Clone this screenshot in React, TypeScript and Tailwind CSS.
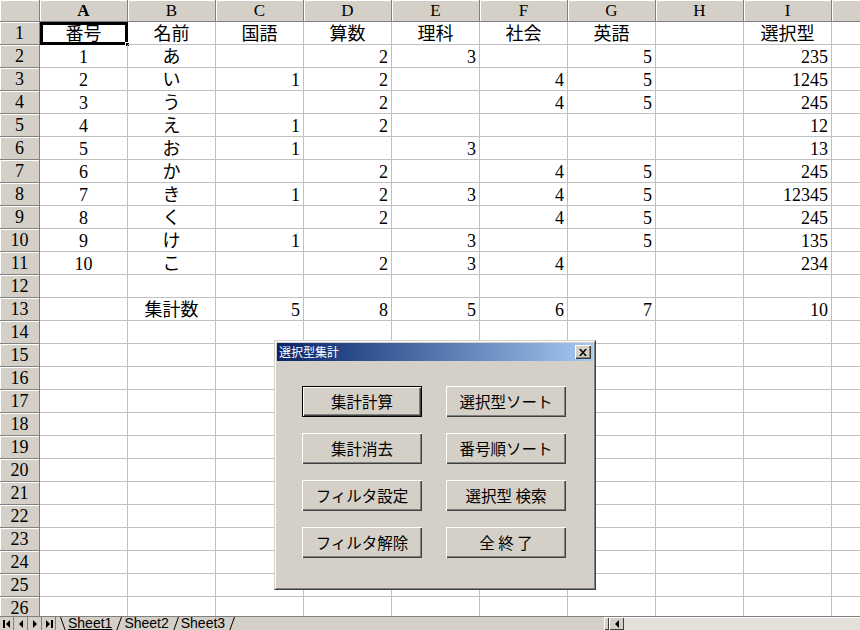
import React from 'react';

const COLS = ['A', 'B', 'C', 'D', 'E', 'F', 'G', 'H', 'I'];

// rows 1..26, each 9 values (A..I)
const DATA: (string | number)[][] = [
  ['番号', '名前', '国語', '算数', '理科', '社会', '英語', '', '選択型'],
  [1, 'あ', '', 2, 3, '', 5, '', 235],
  [2, 'い', 1, 2, '', 4, 5, '', 1245],
  [3, 'う', '', 2, '', 4, 5, '', 245],
  [4, 'え', 1, 2, '', '', '', '', 12],
  [5, 'お', 1, '', 3, '', '', '', 13],
  [6, 'か', '', 2, '', 4, 5, '', 245],
  [7, 'き', 1, 2, 3, 4, 5, '', 12345],
  [8, 'く', '', 2, '', 4, 5, '', 245],
  [9, 'け', 1, '', 3, '', 5, '', 135],
  [10, 'こ', '', 2, 3, 4, '', '', 234],
  ['', '', '', '', '', '', '', '', ''],
  ['', '集計数', 5, 8, 5, 6, 7, '', 10],
];

const ROW_COUNT = 26;

const cellFont = { fontFamily: '"Liberation Serif", "Noto Sans CJK JP", serif' };

function DialogButton({ label, isDefault }: { label: string; isDefault?: boolean }) {
  return (
    <button
      className={
        'h-[31px] w-[120px] bg-[#d4d0c8] text-[15.5px] text-black flex items-center justify-center ' +
        (isDefault
          ? 'border border-black shadow-[inset_1px_1px_0_#fff,inset_-1px_-1px_0_#404040,inset_-2px_-2px_0_#808080]'
          : 'shadow-[inset_1px_1px_0_#fff,inset_-1px_-1px_0_#404040,inset_-2px_-2px_0_#808080]')
      }
      style={{ fontFamily: '"Noto Sans CJK JP", sans-serif', whiteSpace: 'pre' }}
    >
      {label}
    </button>
  );
}

function NavButton({ kind }: { kind: 'first' | 'prev' | 'next' | 'last' }) {
  return (
    <div className="w-[14px] h-[14px] flex items-center justify-center bg-[#d4d0c8] border-r border-[#808080]">
      <svg width="10" height="10" viewBox="0 0 10 10">
        {kind === 'first' && (
          <>
            <rect x="1" y="1" width="2" height="8" fill="#000" />
            <polygon points="8,1 8,9 4,5" fill="#000" />
          </>
        )}
        {kind === 'prev' && <polygon points="7,1 7,9 3,5" fill="#000" />}
        {kind === 'next' && <polygon points="3,1 3,9 7,5" fill="#000" />}
        {kind === 'last' && (
          <>
            <polygon points="2,1 2,9 6,5" fill="#000" />
            <rect x="7" y="1" width="2" height="8" fill="#000" />
          </>
        )}
      </svg>
    </div>
  );
}

function Slash({ back }: { back?: boolean }) {
  return (
    <svg width="6" height="14" viewBox="0 0 6 14" className="shrink-0">
      {back ? (
        <line x1="0.5" y1="0" x2="5.5" y2="14" stroke="#000" strokeWidth="1" />
      ) : (
        <line x1="5.5" y1="0" x2="0.5" y2="14" stroke="#000" strokeWidth="1" />
      )}
    </svg>
  );
}

export default function App() {
  const rows = Array.from({ length: ROW_COUNT }, (_, i) => DATA[i] ?? Array(9).fill(''));

  return (
    <div className="w-[860px] h-[630px] overflow-hidden bg-white relative flex flex-col select-none">
      {/* ── Sheet grid ── */}
      <div className="h-[616px] overflow-hidden">
        <div className="grid grid-cols-[40px_repeat(9,88px)_1fr] grid-rows-[22px] auto-rows-[23px]" style={cellFont}>
          {/* column header row */}
          <div className="bg-[#d4d0c8] border-r border-b border-[#808080] shadow-[inset_1px_1px_0_#fff]" />
          {COLS.map((c) => (
            <div
              key={c}
              className={
                'bg-[#d4d0c8] border-r border-b border-[#808080] shadow-[inset_1px_1px_0_#fff] flex items-center justify-center text-[17px] text-black ' +
                (c === 'A' ? 'font-bold' : '')
              }
            >
              {c}
            </div>
          ))}
          <div className="bg-[#d4d0c8] border-b border-[#808080] shadow-[inset_1px_1px_0_#fff]" />

          {rows.map((row, ri) => (
            <React.Fragment key={ri}>
              <div className="bg-[#d4d0c8] border-r border-b border-[#808080] shadow-[inset_1px_1px_0_#fff] flex items-center justify-center text-[18px] text-black">
                {ri + 1}
              </div>
              {row.map((v, ci) => {
                const centered = ri === 0 || ci <= 1;
                const active = ri === 0 && ci === 0;
                return (
                  <div
                    key={ci}
                    className={
                      'relative border-r border-b border-[#c0c0c0] flex items-center text-[18px] text-black leading-none pt-[1px] ' +
                      (centered ? 'justify-center' : 'justify-end pr-[3px]')
                    }
                  >
                    {v}
                    {active && (
                      <div className="absolute left-0 top-0 w-[88px] h-[23px] border-[3px] border-black">
                        <div className="absolute right-[-5px] bottom-[-5px] w-[5px] h-[5px] bg-black border border-white" />
                      </div>
                    )}
                  </div>
                );
              })}
              <div className="border-b border-[#c0c0c0]" />
            </React.Fragment>
          ))}
        </div>
      </div>

      {/* ── Sheet tabs + horizontal scroll ── */}
      <div className="h-[14px] flex bg-[#d4d0c8] border-t border-[#808080]">
        <div className="w-[604px] flex items-stretch">
          <NavButton kind="first" />
          <NavButton kind="prev" />
          <NavButton kind="next" />
          <NavButton kind="last" />
          <div className="flex items-stretch ml-[4px] text-[14px] leading-[13px] text-black" style={{ fontFamily: '"Liberation Sans", sans-serif' }}>
            <Slash back />
            <span className="pl-[2px] pr-[4px] underline">Sheet1</span>
            <Slash />
            <span className="pl-[2px] pr-[4px]">Sheet2</span>
            <Slash />
            <span className="pl-[2px] pr-[4px]">Sheet3</span>
            <Slash />
          </div>
        </div>
        <div className="w-[5px] bg-[#d4d0c8] shadow-[inset_1px_1px_0_#fff,inset_-1px_-1px_0_#404040]" />
        <div className="w-[15px] flex items-center justify-center shadow-[inset_1px_1px_0_#fff,inset_-1px_-1px_0_#404040]">
          <svg width="6" height="8" viewBox="0 0 6 8">
            <polygon points="5,0 5,8 1,4" fill="#000" />
          </svg>
        </div>
        <div className="flex-1 bg-[#e4e1da] shadow-[inset_0_1px_0_#fff]" />
      </div>

      {/* ── Floating dialog window ── */}
      <div className="absolute left-[274px] top-[340px] w-[322px] h-[250px] border border-t-[#d4d0c8] border-l-[#d4d0c8] border-r-[#404040] border-b-[#404040]">
        <div className="h-full bg-[#d4d0c8] border border-t-white border-l-white border-r-[#808080] border-b-[#808080] p-[1px] flex flex-col">
          <div className="h-[18px] flex items-center justify-between pl-[2px] pr-[2px] bg-gradient-to-r from-[#0a246a] to-[#a6caf0]">
            <span className="text-white text-[12px] leading-none" style={{ fontFamily: '"Noto Sans CJK JP", sans-serif' }}>
              選択型集計
            </span>
            <div className="w-[16px] h-[14px] bg-[#d4d0c8] flex items-center justify-center shadow-[inset_1px_1px_0_#fff,inset_-1px_-1px_0_#404040,inset_-2px_-2px_0_#808080]">
              <svg width="8" height="7" viewBox="0 0 8 7">
                <path d="M0 0 L2 0 L4 2.5 L6 0 L8 0 L5 3.5 L8 7 L6 7 L4 4.5 L2 7 L0 7 L3 3.5 Z" fill="#000" />
              </svg>
            </div>
          </div>
          <div className="pt-[25px] pl-[25px] grid grid-cols-[120px_120px] gap-x-[24px] gap-y-[16px]">
            <DialogButton label="集計計算" isDefault />
            <DialogButton label="選択型ソート" />
            <DialogButton label="集計消去" />
            <DialogButton label="番号順ソート" />
            <DialogButton label="フィルタ設定" />
            <DialogButton label="選択型 検索" />
            <DialogButton label="フィルタ解除" />
            <DialogButton label="全 終 了" />
          </div>
        </div>
      </div>
    </div>
  );
}
